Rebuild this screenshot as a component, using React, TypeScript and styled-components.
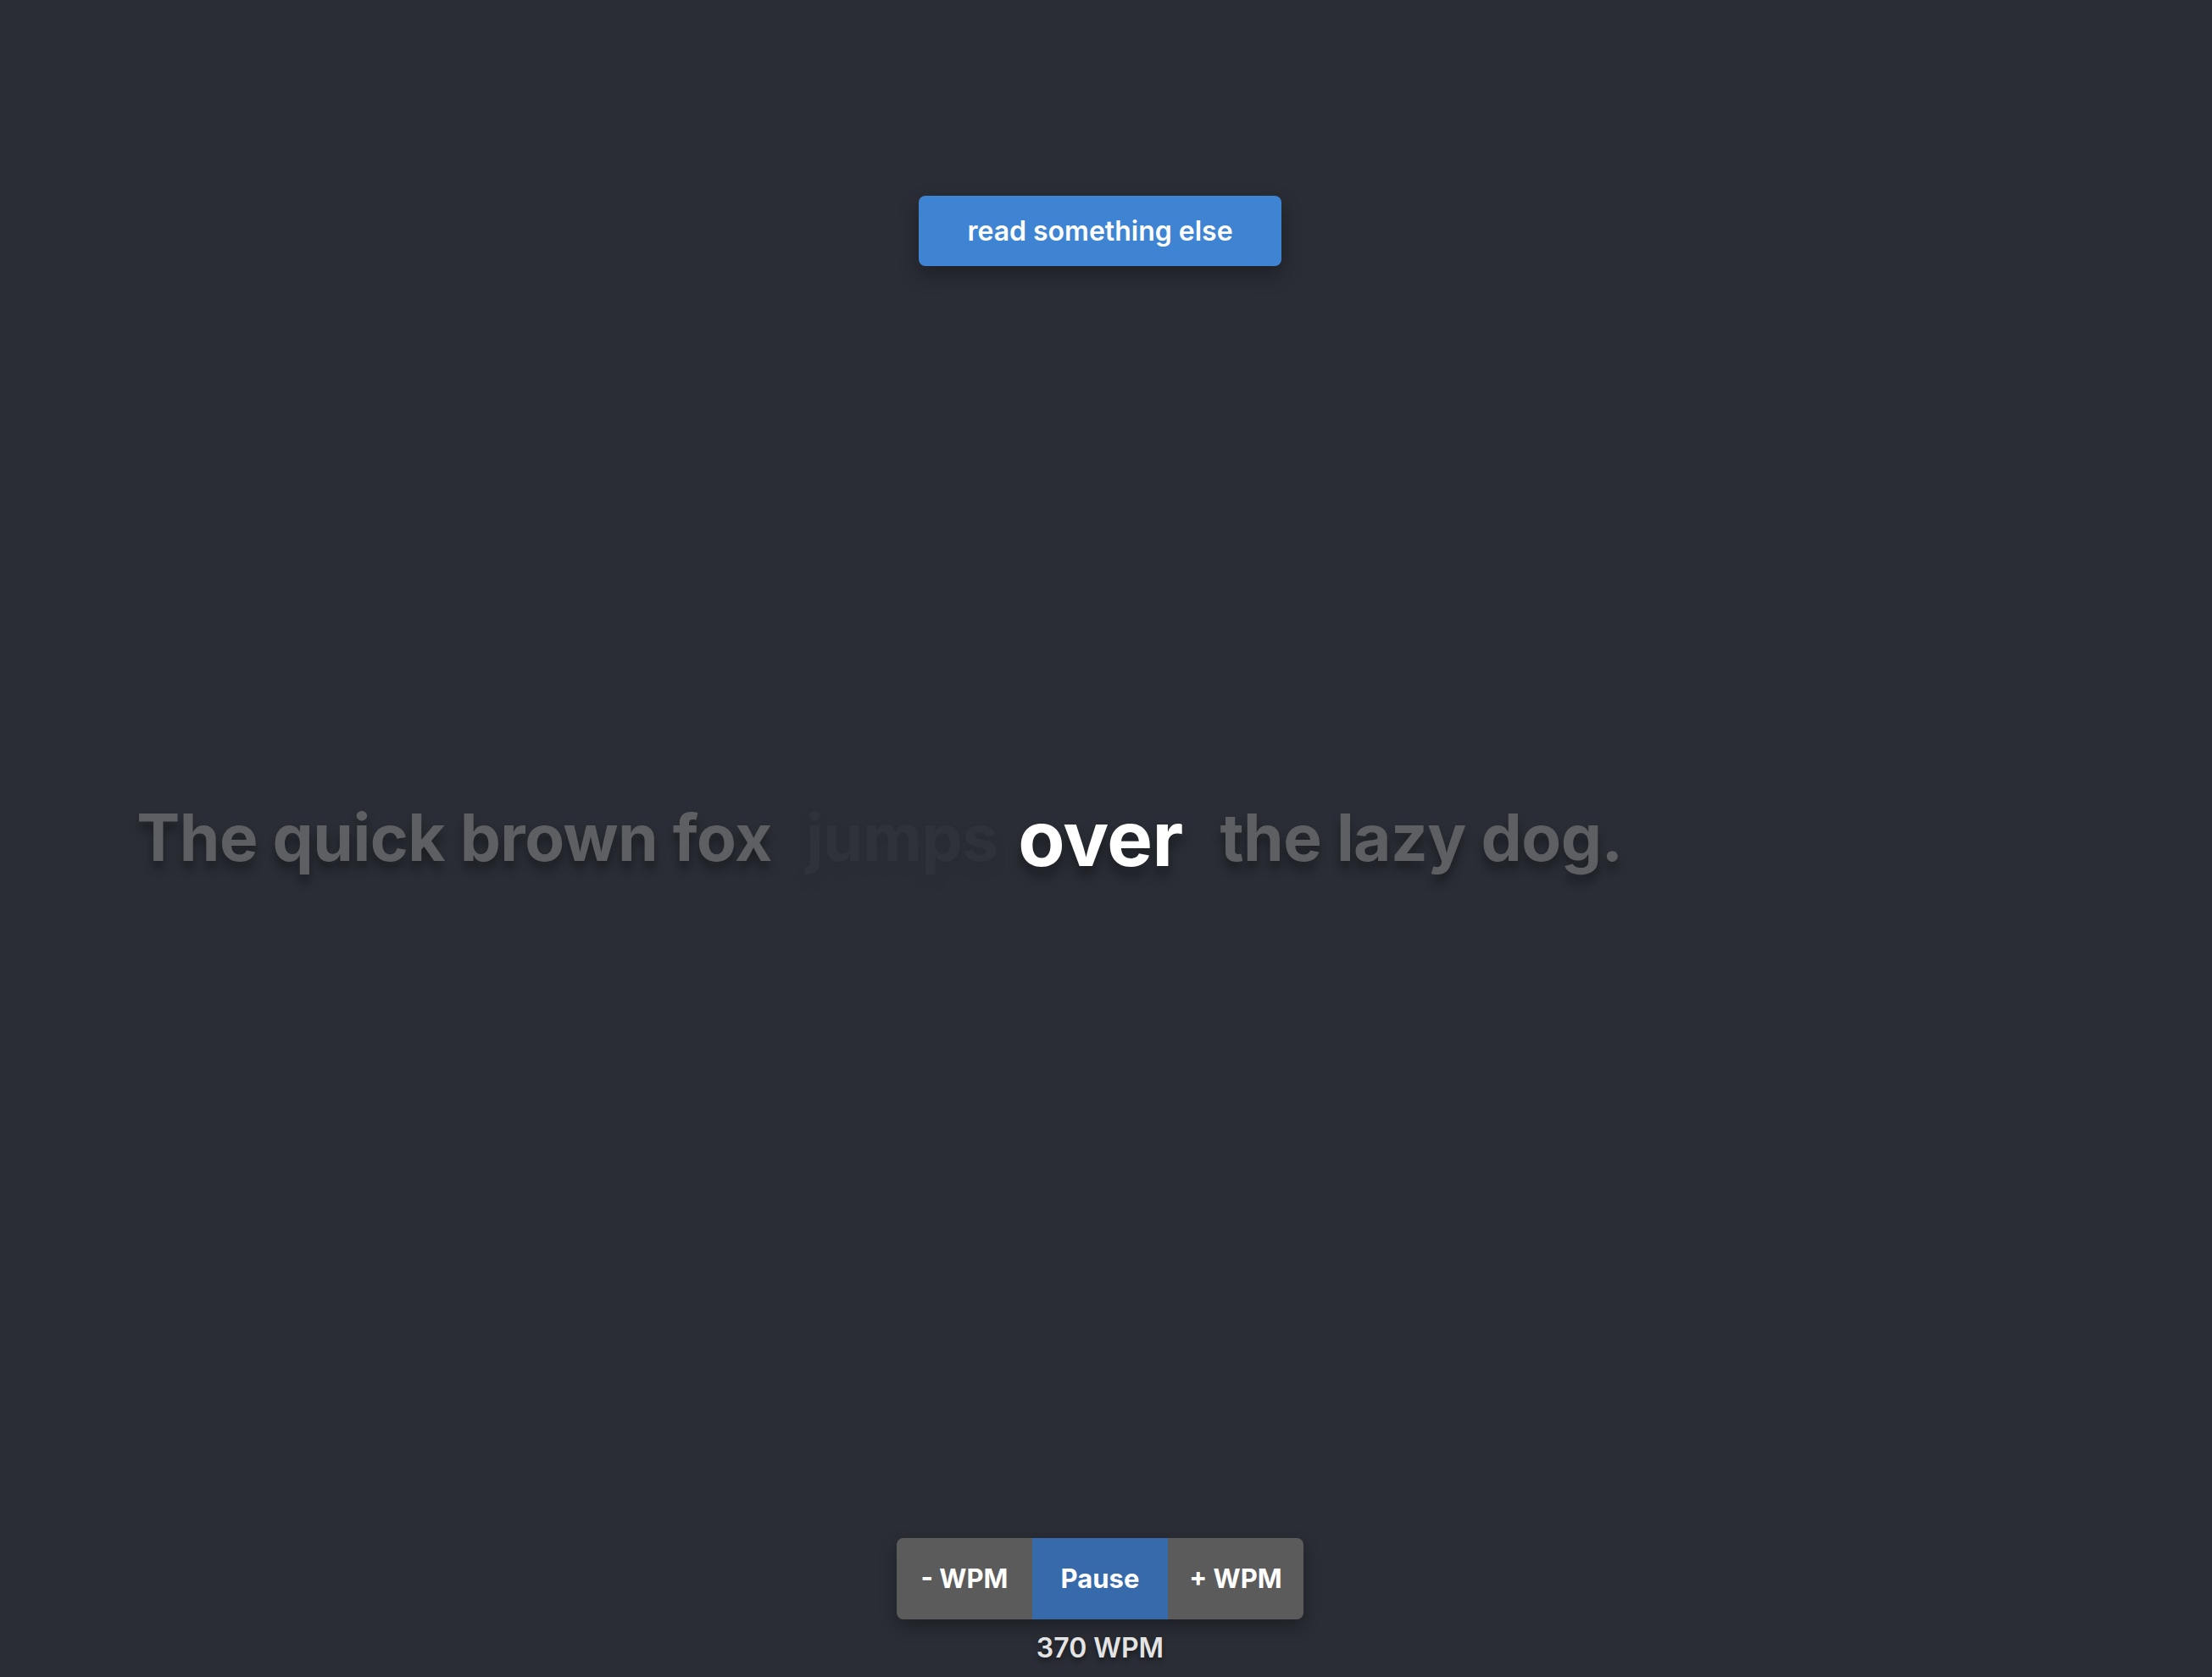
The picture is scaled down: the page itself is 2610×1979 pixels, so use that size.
import React from "react";
import styled, { createGlobalStyle } from "styled-components";

const Global = createGlobalStyle`
  html, body { margin: 0; padding: 0; background: #2a2d35; }
  body { font-family: Inter, "Noto Sans", "Liberation Sans", sans-serif; -webkit-font-smoothing: antialiased; }
`;

const Page = styled.div`
  min-height: 100vh;
  box-sizing: border-box;
  display: flex;
  flex-direction: column;
  align-items: center;
  padding: 231px 14px 0 0;
  background: #2a2d35;
`;

const TopButton = styled.button`
  height: 83px;
  padding: 0 57px;
  border: none;
  border-radius: 8px;
  background: #3f84d3;
  color: #ffffff;
  font-family: Inter, "Noto Sans", sans-serif;
  font-size: 32px;
  font-weight: 600;
  box-shadow: 0 10px 24px rgba(0, 0, 0, 0.3);
  cursor: pointer;
`;

const Stage = styled.div`
  flex: 1;
  width: 100%;
  display: flex;
  align-items: center;
  padding-bottom: 150px;
  box-sizing: border-box;
`;

const Line = styled.div`
  width: 100%;
  display: flex;
  align-items: baseline;
  font-size: 76.5px;
  font-weight: 700;
  line-height: 1.2;
  letter-spacing: -0.5px;
  white-space: nowrap;
  text-shadow: 0 10px 12px rgba(0, 0, 0, 0.35);
`;

const Side = styled.div<{ $align: "start" | "end" }>`
  flex: 1;
  display: flex;
  justify-content: ${(p) => (p.$align === "end" ? "flex-end" : "flex-start")};
  align-items: baseline;
`;

const Word = styled.span<{ $tone: "past" | "fading" | "future" }>`
  color: #5e5f62;
  opacity: ${(p) => (p.$tone === "fading" ? 0.11 : 1)};
  margin: ${(p) =>
    p.$tone === "fading" ? "0 38px 0 40px" : p.$tone === "future" ? "0 0 0 59px" : "0"};
`;

const Current = styled.span`
  display: inline-block;
  color: #ffffff;
  transform: scale(1.18);
  transform-origin: 50% 45%;
`;

const Controls = styled.div`
  display: flex;
  flex-direction: column;
  align-items: center;
  padding-bottom: 15px;
`;

const Group = styled.div`
  display: flex;
  border-radius: 8px;
  overflow: hidden;
  box-shadow: 0 8px 20px rgba(0, 0, 0, 0.3);
`;

const CtrlButton = styled.button<{ $primary?: boolean }>`
  width: 160px;
  height: 96px;
  border: none;
  background: ${(p) => (p.$primary ? "#376aaa" : "#5b5b5b")};
  color: #ffffff;
  font-family: Inter, "Noto Sans", sans-serif;
  font-size: 31px;
  font-weight: 700;
  cursor: pointer;
`;

const Rate = styled.div`
  margin-top: 15px;
  color: #e4e4e4;
  font-size: 32px;
  font-weight: 600;
  line-height: 1.2;
  text-shadow: 0 4px 6px rgba(0, 0, 0, 0.4);
`;

export default function App() {
  return (
    <>
      <Global />
      <Page>
        <TopButton>read something else</TopButton>
        <Stage>
          <Line>
            <Side $align="end">
              <Word $tone="past">The quick brown fox</Word>
              <Word $tone="fading">jumps</Word>
            </Side>
            <Current>over</Current>
            <Side $align="start">
              <Word $tone="future">the lazy dog.</Word>
            </Side>
          </Line>
        </Stage>
        <Controls>
          <Group>
            <CtrlButton>- WPM</CtrlButton>
            <CtrlButton $primary>Pause</CtrlButton>
            <CtrlButton>+ WPM</CtrlButton>
          </Group>
          <Rate>370 WPM</Rate>
        </Controls>
      </Page>
    </>
  );
}
